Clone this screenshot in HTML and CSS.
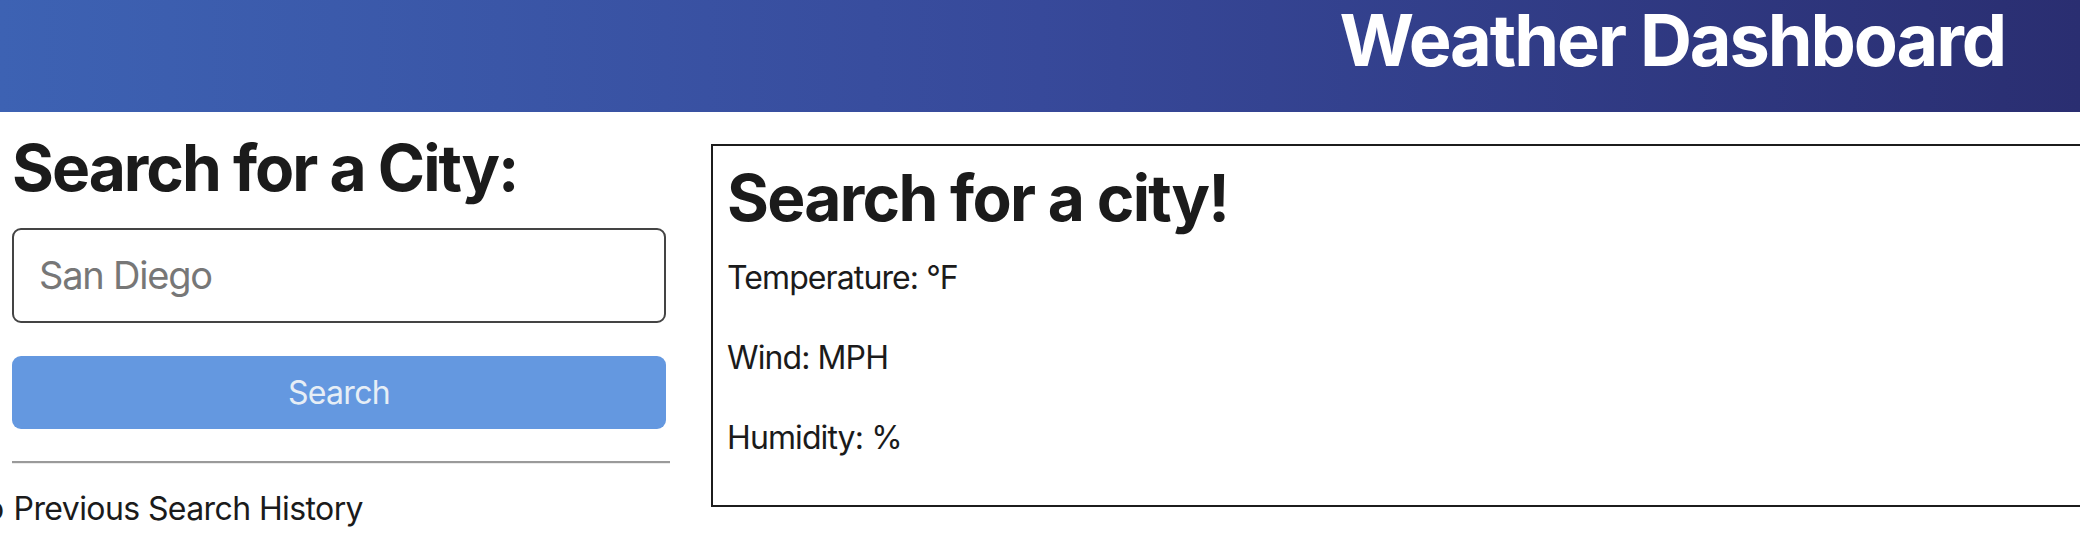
FILE: index.html
```html
<!DOCTYPE html>
<html lang="en">
<head>
<meta charset="utf-8">
<title>Weather Dashboard</title>
<link rel="stylesheet" href="styles.css">
</head>
<body>
<header class="top-bar">
  <h1 class="app-title">Weather Dashboard</h1>
</header>
<main class="layout">
  <section class="search-panel">
    <h2 class="panel-title">Search for a City:</h2>
    <input class="city-input" type="text" placeholder="San Diego">
    <button class="search-btn" type="button">Search</button>
    <hr class="divider">
    <ul class="history">
      <li class="history-item">Previous Search History</li>
    </ul>
  </section>
  <section class="current-weather">
    <h2 class="weather-title">Search for a city!</h2>
    <div class="stats">
      <p class="stat">Temperature: °F</p>
      <p class="stat">Wind: MPH</p>
      <p class="stat">Humidity: %</p>
    </div>
  </section>
</main>
</body>
</html>
```
FILE: styles.css
```css
html, body {
  margin: 0;
  padding: 0;
  overflow: hidden;
}
body {
  font-family: Inter, "Noto Sans", sans-serif;
  color: #1b1b1b;
  background: #fff;
}
.top-bar {
  height: 112px;
  box-sizing: border-box;
  display: flex;
  justify-content: flex-end;
  align-items: flex-start;
  padding: 4px 75px 0 0;
  background: linear-gradient(to right, #3d62b3 0%, #37499a 50%, #2a2e71 100%);
}
.app-title {
  margin: 0;
  font-size: 72px;
  line-height: 72px;
  font-weight: 700;
  color: #fff;
  letter-spacing: -2.1px;
}
.layout {
  display: flex;
  align-items: flex-start;
  gap: 41px;
  padding-left: 12px;
}
.search-panel {
  flex: none;
  width: 658px;
  display: flex;
  flex-direction: column;
}
.panel-title {
  margin: 18px 0 21px;
  font-size: 64px;
  line-height: 76.8px;
  font-weight: 700;
  letter-spacing: -2px;
}
.city-input {
  box-sizing: border-box;
  width: 654px;
  height: 95px;
  border: 2px solid #444;
  border-radius: 9px;
  padding: 0 0 0 25px;
  font-family: inherit;
  font-size: 38px;
  letter-spacing: -1.2px;
  color: #1b1b1b;
  outline: none;
}
.city-input::placeholder {
  color: #777;
}
.search-btn {
  box-sizing: border-box;
  width: 654px;
  height: 72.5px;
  margin-top: 33.5px;
  border: none;
  border-radius: 9px;
  background: #6498e0;
  color: #e6eef6;
  font-family: inherit;
  font-size: 32px;
  letter-spacing: -0.7px;
  padding: 0;
}
.divider {
  width: 658px;
  margin: 32px 0 0;
  border: none;
  border-top: 2px solid #9a9a9a;
  border-bottom: 1px solid #ececec;
}
.history {
  list-style: none;
  margin: 21px 0 0;
  padding: 0;
}
.history-item {
  font-size: 32px;
  line-height: 48px;
  letter-spacing: -0.6px;
}
.history-item::before {
  content: "o";
  margin-left: -27px;
  margin-right: 10px;
}
.current-weather {
  flex: none;
  width: 1500px;
  margin-top: 32px;
  border: 2px solid #1c1c1c;
  padding: 14px 14px 43px;
}
.weather-title {
  margin: 0 0 17px;
  font-size: 64px;
  line-height: 76.8px;
  font-weight: 700;
  letter-spacing: -1.7px;
}
.stats {
  display: flex;
  flex-direction: column;
  gap: 32px;
}
.stat {
  margin: 0;
  font-size: 32px;
  line-height: 48px;
  letter-spacing: -0.9px;
}
```
